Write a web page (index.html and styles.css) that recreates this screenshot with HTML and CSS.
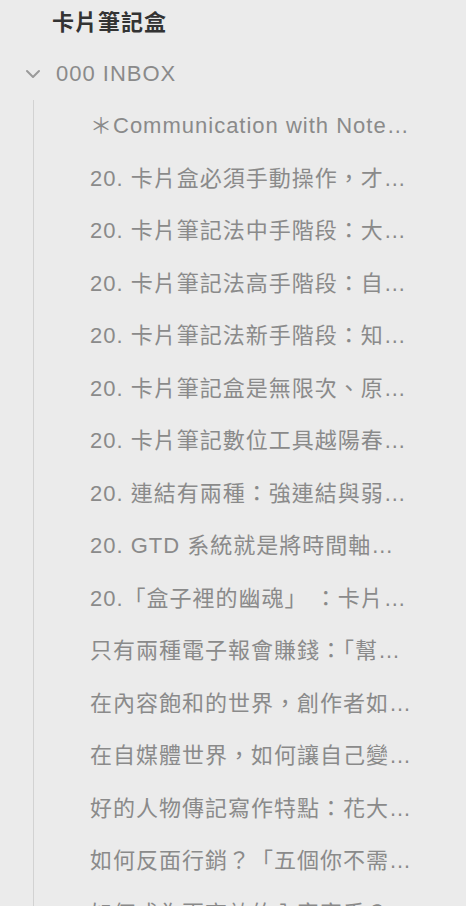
FILE: index.html
```html
<!DOCTYPE html>
<html lang="zh-Hant">
<head>
<meta charset="utf-8">
<title>卡片筆記盒</title>
<link rel="stylesheet" href="styles.css">
</head>
<body>
<div class="tree">
  <div class="vault-title">卡片筆記盒</div>
  <div class="folder">
    <div class="folder-title">
      <svg class="chevron" width="16" height="16" viewBox="0 0 16 16"><path d="M2 5 L8 11 L14 5" fill="none" stroke="#9a9a9a" stroke-width="2" stroke-linecap="round" stroke-linejoin="round"/></svg>
      <span class="folder-name">000 INBOX</span>
    </div>
    <div class="children">
      <div class="item">＊Communication with Notebook Systems</div>
      <div class="item">20. 卡片盒必須手動操作，才能真正內化</div>
      <div class="item">20. 卡片筆記法中手階段：大量連結</div>
      <div class="item">20. 卡片筆記法高手階段：自然產出</div>
      <div class="item">20. 卡片筆記法新手階段：知識累積</div>
      <div class="item">20. 卡片筆記盒是無限次、原子化的</div>
      <div class="item">20. 卡片筆記數位工具越陽春越好</div>
      <div class="item">20. 連結有兩種：強連結與弱連結</div>
      <div class="item">20. GTD 系統就是將時間軸線化</div>
      <div class="item">20.「盒子裡的幽魂」 ：卡片盒會說話</div>
      <div class="item">只有兩種電子報會賺錢：「幫助」與「娛樂」</div>
      <div class="item">在內容飽和的世界，創作者如何突圍</div>
      <div class="item">在自媒體世界，如何讓自己變得有價值</div>
      <div class="item">好的人物傳記寫作特點：花大量篇幅</div>
      <div class="item">如何反面行銷？「五個你不需要的理由」</div>
      <div class="item">如何成為更高效的內容寫手？</div>
    </div>
  </div>
</div>
</body>
</html>
```

FILE: styles.css
```css
html, body {
  margin: 0;
  padding: 0;
  background: #ebebeb;
}

body {
  font-family: "Liberation Sans", "Noto Sans CJK TC", sans-serif;
  font-size: 22px;
  letter-spacing: 1px;
  color: #8a8a8a;
  overflow: hidden;
  height: 906px;
}

.tree {
  display: flex;
  flex-direction: column;
}

.vault-title {
  height: 48px;
  line-height: 46px;
  padding-left: 52px;
  font-weight: bold;
  color: #333333;
}

.folder-title {
  height: 52px;
  display: flex;
  align-items: center;
  padding-left: 25px;
  gap: 15px;
}

.chevron {
  flex: none;
}

.folder-name {
  line-height: 52px;
}

.children {
  margin-left: 33px;
  border-left: 1px solid #d2d2d2;
  display: flex;
  flex-direction: column;
}

.item {
  height: 52.5px;
  line-height: 51px;
  padding-left: 56px;
  width: 324px;
  white-space: nowrap;
  overflow: hidden;
  text-overflow: ellipsis;
}
```
